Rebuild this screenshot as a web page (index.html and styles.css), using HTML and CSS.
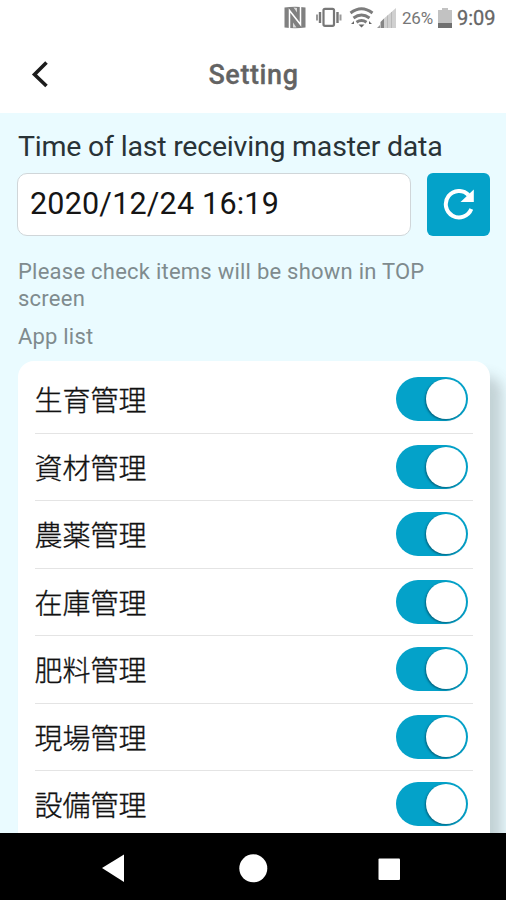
FILE: index.html
```html
<!DOCTYPE html>
<html lang="en">
<head>
<meta charset="utf-8">
<title>Setting</title>
<link rel="stylesheet" href="styles.css">
</head>
<body>
<div class="screen">
  <div class="statusbar">
    <svg class="status-icons" width="116" height="36" viewBox="0 0 116 36">
      <path d="M1.500 7.500q10.500-1.500 21 0v20q-10.500 1.500-21 0z" fill="#808080"/>
      <path d="M6.500 28V10.500L17.500 24.500V7" fill="none" stroke="#fff" stroke-width="1.500"/>
      <path d="M10.500 7.500l3.500 5V8zM10 27.500v-5l3.500 5z" fill="#fff" opacity=".7"/>
      <rect x="40.500" y="8.800" width="10.500" height="17" rx="1.500" fill="none" stroke="#777" stroke-width="2.200"/>
      <path d="M37 12v11M54.500 12v11" stroke="#777" stroke-width="2.400"/>
      <path d="M34 14.500v6M57.500 14.500v6" stroke="#999" stroke-width="2"/>
      <path d="M67.500 13q11-8.500 22 0M70.500 18q8-6 16 0M73.500 22.300q5-3.500 10 0" fill="none" stroke="#7c7c7c" stroke-width="2.900"/>
      <path d="M75.500 24.500h6l-3 3zM68 24l3-3v3zM86 21l3 3h-3z" fill="#666"/>
      <path d="M94 28l3-3v3z" fill="#999"/>
      <path d="M97.500 28v-6l3.500-3.500V28z" fill="#858585"/>
      <path d="M101 28V18.500L113 8v20z" fill="#d0d0d0"/>
      <path d="M104.500 28V15.500M108.500 28V12" stroke="#b8b8b8" stroke-width="1"/>
    </svg>
    <span class="percent">26%</span>
    <svg class="battery" width="14" height="20" viewBox="0 0 14 20">
      <path d="M0 2h4V0h6v2h4v18H0z" fill="#c2c2c2"/>
      <path d="M0 15h14v5H0z" fill="#707070"/>
    </svg>
    <span class="clock">9:09</span>
  </div>
  <div class="header">
    <svg class="back" width="20" height="30" viewBox="0 0 20 30"><path d="M16.500 2.500L4.500 14.500l12 11.500" fill="none" stroke="#1c1c1c" stroke-width="3.600"/></svg>
    <h1 class="title">Setting</h1>
  </div>
  <div class="content">
    <div class="label">Time of last receiving master data</div>
    <div class="field-row">
      <div class="field">2020/12/24 16:19</div>
      <div class="refresh">
        <svg width="32" height="32" viewBox="0 0 32 32">
          <path d="M28.300 20A13.200 13.200 0 1 1 25.500 6" fill="none" stroke="#fff" stroke-width="4"/>
          <path d="M30.800 .5V13H17.500z" fill="#fff"/>
        </svg>
      </div>
    </div>
    <p class="hint">Please check items will be shown in TOP<br>screen</p>
    <p class="list-title">App list</p>
    <div class="card">
      <div class="row"><span>生育管理</span><i class="toggle"></i></div>
      <div class="row"><span>資材管理</span><i class="toggle"></i></div>
      <div class="row"><span>農薬管理</span><i class="toggle"></i></div>
      <div class="row"><span>在庫管理</span><i class="toggle"></i></div>
      <div class="row"><span>肥料管理</span><i class="toggle"></i></div>
      <div class="row"><span>現場管理</span><i class="toggle"></i></div>
      <div class="row"><span>設備管理</span><i class="toggle"></i></div>
    </div>
  </div>
  <div class="navbar">
    <svg width="506" height="67" viewBox="0 0 506 67" fill="#fff">
      <path d="M102 35L124 21.500v27.500z"/>
      <circle cx="253.300" cy="35.300" r="14"/>
      <rect x="378.500" y="25.500" width="21.500" height="21.500" rx="1"/>
    </svg>
  </div>
</div>
</body>
</html>
```
FILE: styles.css
```css
* { box-sizing: border-box; }
body { margin: 0; font-family: Roboto, "Noto Sans CJK JP", sans-serif; background: #fff; }
h1, p { margin: 0; }
.screen { width: 506px; height: 900px; overflow: hidden; display: flex; flex-direction: column; }
.statusbar { height: 36px; display: flex; align-items: center; padding-left: 283px; color: #777; flex: none; }
.status-icons { flex: none; }
.percent { width: 35px; margin-left: 3px; font-size: 17px; letter-spacing: -0.2px; }
.battery { margin: 0 5px 0 1px; flex: none; }
.clock { font-size: 20px; color: #666; -webkit-text-stroke: 0.3px #666; }
.header { height: 77px; flex: none; display: grid; grid-template-columns: 60px 1fr 60px; align-items: center; }
.back { margin-left: 30px; }
.title { text-align: center; font-size: 27px; line-height: 32px; font-weight: 500; letter-spacing: 0.6px; color: #636363; -webkit-text-stroke: 0.3px #636363; padding-left: 1px; }
.content { flex: 1; min-height: 0; overflow: hidden; background: #eafbff; padding: 17px 16px 0 17px; }
.label { font-size: 28.500px; line-height: 34px; letter-spacing: -0.210px; color: #293337; white-space: nowrap; padding-left: 1px; }
.field-row { display: flex; gap: 16px; margin-top: 9px; }
.field { flex: 1; height: 63px; border: 1.500px solid #d0d6d9; border-radius: 10px; background: #fff; padding-left: 12px; font-size: 30.500px; line-height: 59px; letter-spacing: 0.200px; color: #151515; white-space: nowrap; }
.refresh { width: 63px; height: 63px; border-radius: 6px; background: #04a2c9; display: flex; align-items: center; justify-content: center; }
.hint { margin-top: 22px; padding-left: 1px; font-size: 22px; line-height: 27px; letter-spacing: 0.240px; color: #7f8b8e; white-space: nowrap; }
.list-title { margin-top: 11px; padding-left: 1px; font-size: 22px; line-height: 27px; letter-spacing: 0.200px; color: #7f8b8e; }
.card { margin-top: 11px; margin-left: 1px; padding: 5px 17px 0; height: 560px; background: #fff; border-radius: 16px; box-shadow: 12px 15px 13px rgba(70, 80, 80, 0.24); }
.row { height: 67.500px; display: flex; align-items: center; justify-content: space-between; border-bottom: 1.500px solid #e4e4e4; }
.row span { font-family: "Noto Sans CJK JP", sans-serif; font-size: 28px; line-height: 40px; font-weight: 300; -webkit-text-stroke: 0.350px #111; color: #111; margin-left: -0.500px; }
.toggle { width: 72px; height: 44px; margin-right: 5px; border-radius: 22px; background: #04a2c9; padding: 2px; display: flex; justify-content: flex-end; }
.toggle::after { content: ""; width: 40px; height: 40px; border-radius: 50%; background: #fff; box-shadow: -1px 1px 2px rgba(0, 50, 70, 0.55); }
.navbar { height: 67px; flex: none; background: #000; }
.navbar svg { display: block; }
```
